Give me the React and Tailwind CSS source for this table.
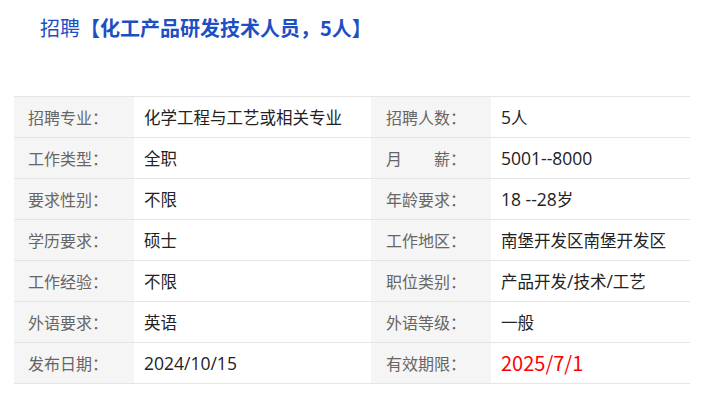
const rows = [
  ['招聘专业：', '化学工程与工艺或相关专业', '招聘人数：', '5人'],
  ['工作类型：', '全职', '月　　薪：', '5001--8000'],
  ['要求性别：', '不限', '年龄要求：', '18 --28岁'],
  ['学历要求：', '硕士', '工作地区：', '南堡开发区南堡开发区'],
  ['工作经验：', '不限', '职位类别：', '产品开发/技术/工艺'],
  ['外语要求：', '英语', '外语等级：', '一般'],
  ['发布日期：', '2024/10/15', '有效期限：', '2025/7/1'],
];

// latin runs get a wider face, like YaHei's latin glyphs
function Mixed({ text }) {
  return text.split(/([\x00-\x7f]+)/).map((part, i) =>
    /^[\x00-\x7f]+$/.test(part) ? (
      <span key={i} className="font-['Open_Sans',sans-serif] text-[17.5px] whitespace-pre">
        {part}
      </span>
    ) : (
      <span key={i}>{part}</span>
    )
  );
}

export default function App() {
  return (
    <div className="w-[723px] h-[396px] bg-white font-['Noto_Sans_CJK_SC',sans-serif] overflow-hidden">
      {/* Title */}
      <div className="h-[96px] pl-[40px] pt-[14px]">
        <h1 className="text-[20px] leading-[28px] text-[#1d4fc4]">
          招聘<span className="font-bold">【化工产品研发技术人员，5人】</span>
        </h1>
      </div>

      {/* Detail table */}
      <div className="ml-[14px] w-[676px] border-t border-[#e5e5e5] text-[16px]">
        {rows.map((r, i) => (
          <div key={i} className="flex h-[41px] border-b border-[#e5e5e5]">
            <div className="w-[120px] bg-[#f5f5f5] pl-[14px] flex items-center text-[#666]">{r[0]}</div>
            <div className="w-[237px] pl-[10px] flex items-center text-[16.5px] text-[#222]">
              <Mixed text={r[1]} />
            </div>
            <div className="w-[120px] bg-[#f5f5f5] pl-[15px] flex items-center text-[#666]">{r[2]}</div>
            {i === 6 ? (
              <div className="flex-1 pl-[10px] flex items-center text-[20px] text-[#ff0000]">{r[3]}</div>
            ) : (
              <div className="flex-1 pl-[10px] flex items-center text-[16.5px] text-[#222]">
                <Mixed text={r[3]} />
              </div>
            )}
          </div>
        ))}
      </div>
    </div>
  );
}
